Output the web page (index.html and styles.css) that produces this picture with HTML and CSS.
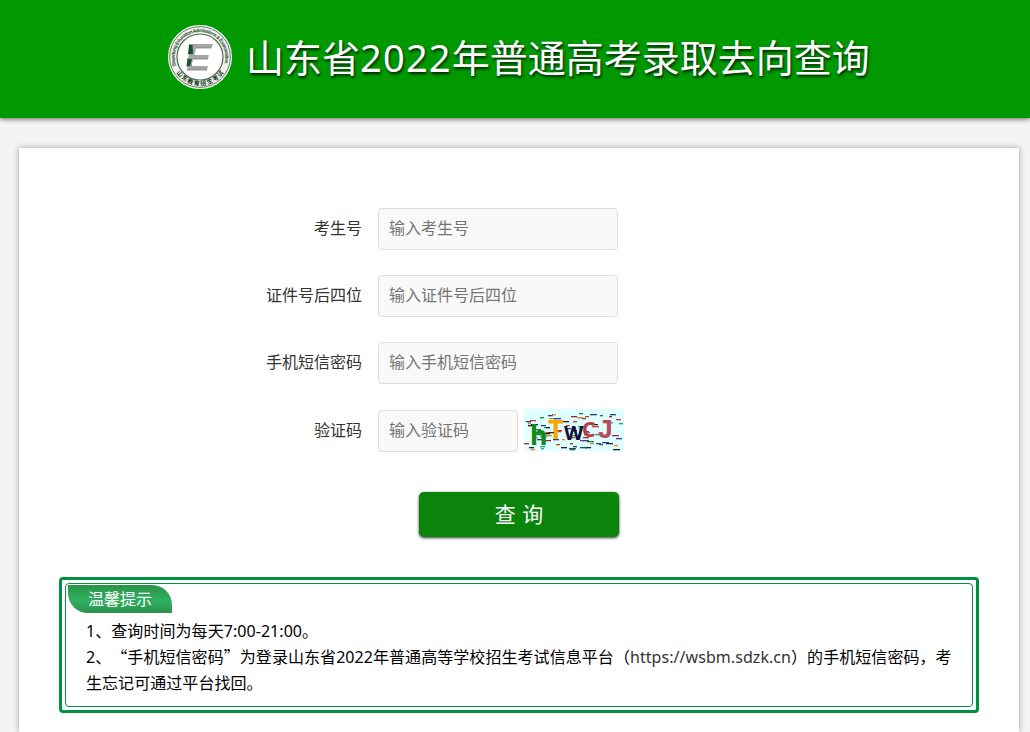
FILE: index.html
```html
<!DOCTYPE html>
<html lang="zh-CN">
<head>
    <meta charset="UTF-8">
    <title>山东省2022年普通高考录取去向查询</title>
    <link rel="stylesheet" href="styles.css">
</head>
<body>
    <header class="header">
        <svg class="logo" width="66" height="66" viewBox="0 0 66 66">
            <defs>
                <path id="arcTop" d="M 9.4 42 A 25.2 25.2 0 1 1 56.6 42"/>
                <path id="arcBottom" d="M 6.5 43.5 A 28.5 28.5 0 0 0 59.5 43.5"/>
            </defs>
            <circle cx="33" cy="33" r="31" fill="#eef3ec" stroke="#fff" stroke-width="2"/>
            <circle cx="33" cy="33" r="30.4" fill="none" stroke="#5d7a5e" stroke-width="1"/>
            <circle cx="33" cy="33" r="23" fill="#fff" stroke="#50694f" stroke-width="1.2"/>
            <text class="logo-en"><textPath href="#arcTop" textLength="94">Shandong Education Admissions &amp; Examination</textPath></text>
            <text class="logo-cn"><textPath href="#arcBottom" startOffset="6" textLength="56">山东教育招生考试</textPath></text>
            <path d="M22 20.500h5v10h-6zM20.500 34h5l-1 8.500h-5z" fill="#17532b"/>
            <path d="M25.500 20h20.500l-1.500 4H29l-1.500 7H42l-1 4H26l-1.500 7H41l-1 4H20l1-4h2l2-7h-4l1-4h4z" fill="#a3a7a3"/>
            <path d="M29 24h15.500M26 35h15M20 46h20" fill="none" stroke="#6f7a70" stroke-width=".7"/>
        </svg>
        <h1 class="title">山东省<span class="year">2022</span>年普通高考录取去向查询</h1>
    </header>

    <main class="card">
        <form class="form">
            <div class="row">
                <label for="ksh">考生号</label>
                <input type="text" id="ksh" placeholder="输入考生号">
            </div>
            <div class="row">
                <label for="zjh">证件号后四位</label>
                <input type="text" id="zjh" placeholder="输入证件号后四位">
            </div>
            <div class="row">
                <label for="pwd">手机短信密码</label>
                <input type="text" id="pwd" placeholder="输入手机短信密码">
            </div>
            <div class="row row-code">
                <label for="yzm">验证码</label>
                <input type="text" id="yzm" class="short" placeholder="输入验证码">
                <svg class="captcha" id="captcha" width="100" height="42" viewBox="0 0 100 42"></svg>
            </div>
            <button type="button" class="submit-btn">查 询</button>
        </form>

        <section class="tips">
            <div class="tips-inner">
                <h3 class="tips-title">温馨提示</h3>
                <p>1、查询时间为每天7:00-21:00。</p>
                <p>2、<span class="quote">“</span>手机短信密码<span class="quote">”</span>为登录山东省2022年普通高等学校招生考试信息平台（<a href="#">https://wsbm.sdzk.cn</a>）的手机短信密码，考生忘记可通过平台找回。</p>
            </div>
        </section>
    </main>

    <script src="captcha.js"></script>
</body>
</html>
```
FILE: styles.css
```css
* {
    box-sizing: border-box;
}
body {
    margin: 0;
    background-color: #f4f4f4;
    font-family: "Noto Sans", "Noto Sans CJK SC", sans-serif;
    font-size: 16px;
    color: #333;
}
.header {
    display: flex;
    height: 118px;
    padding: 24px 0 0 167px;
    background-color: #009900;
    box-shadow: 0 1px 5px rgba(0, 0, 0, 0.6);
}
.logo-en {
    font-family: "Liberation Sans", sans-serif;
    font-size: 5px;
    font-weight: bold;
    fill: #2f4f33;
}
.logo-cn {
    font-size: 6px;
    font-weight: bold;
    fill: #12351a;
}
.title {
    margin: 0 0 0 13px;
    font-size: 38px;
    line-height: 66px;
    font-weight: 400;
    color: #fff;
    white-space: nowrap;
    text-shadow: 1px 2px 3px rgba(0, 0, 0, 0.8);
}
.year {
    letter-spacing: 1.2px;
}
.card {
    width: 1000px;
    height: 584px;
    margin: 30px 0 0 19px;
    padding: 60px 40px 0;
    background-color: #fff;
    box-shadow: 0 0 6px rgba(0, 0, 0, 0.35);
}
.row {
    display: flex;
    align-items: center;
    height: 42px;
    margin-bottom: 25px;
}
.row label {
    width: 303px;
    margin-right: 16px;
    padding-bottom: 4px;
    text-align: right;
}
.row input {
    width: 240px;
    height: 42px;
    padding: 0 10px 2px;
    border: 1px solid #ddd;
    border-radius: 4px;
    background-color: #f9f9f9;
    font: inherit;
}
.row input::placeholder {
    color: #757575;
}
.row input.short {
    width: 140px;
}
.row-code {
    height: 43px;
    align-items: flex-end;
}
.row-code label {
    padding-bottom: 11px;
}
.captcha {
    align-self: flex-start;
    margin-left: 6px;
    overflow: visible;
}
.captcha text {
    font-weight: bold;
}
.submit-btn {
    display: block;
    width: 200px;
    height: 45px;
    margin: 40px auto 0;
    padding: 0 0 3px;
    border: none;
    border-radius: 5px;
    background-color: #0a840a;
    box-shadow: 0 1px 3px rgba(0, 0, 0, 0.8);
    color: #fff;
    font: inherit;
    font-size: 21px;
    word-spacing: 1px;
}
.tips {
    height: 136px;
    margin-top: 40px;
    padding: 3px;
    border: 3px solid #009242;
    border-radius: 4px;
}
.tips-inner {
    height: 124px;
    padding: 1px 18px 0 20px;
    border: 1px solid #009242;
    border-radius: 4px;
    color: #000;
}
.tips-title {
    width: 104px;
    height: 28px;
    margin: 0 0 5px -18px;
    border-radius: 0 20px 0 20px;
    background: linear-gradient(#2b9348, #2fb062 55%, #2b9348);
    font-size: 16px;
    font-weight: 400;
    line-height: 28px;
    text-align: center;
    color: #fff;
}
.tips p {
    margin: 0;
    line-height: 26px;
    letter-spacing: 0.06px;
    text-spacing-trim: space-all;
}
.quote {
    font-family: "Noto Sans CJK SC", sans-serif;
    line-height: 1;
}
.tips a {
    color: #333;
    text-decoration: none;
}
```
FILE: captcha.js
```js
const captcha = document.getElementById('captcha');
const colors = ['#1c7d2c', '#a02a3a', '#2d3d8a', '#e0862a', '#222', '#2a9a9a', '#d03a2a'];

let seed = 7;
function rand(max) {
    seed = (seed * 16807) % 2147483647;
    return seed % max;
}

let html = '<rect width="100" height="42" fill="#e0ffff"/>';

// noise dashes
for (let i = 0; i < 95; i++) {
    const w = 3 + rand(5);
    const x = rand(100 - w);
    const y = 4 + rand(37);
    html += `<rect x="${x}" y="${y}" width="${w}" height="1.3" fill="${colors[rand(7)]}"/>`;
}

html += '<text x="6" y="36" font-size="27" fill="#128a1a">h</text>';
html += '<text x="24" y="30" font-size="27" fill="#f5a800">T</text>';
html += '<text x="40" y="31" font-size="20" fill="#10103a">W</text>';
html += '<text x="58" y="28" font-size="21" fill="#c0393f">C</text>';
html += '<text x="73" y="29" font-size="28" fill="#b84a5c" style="font-family: Liberation Mono">J</text>';
captcha.innerHTML = html;
```
